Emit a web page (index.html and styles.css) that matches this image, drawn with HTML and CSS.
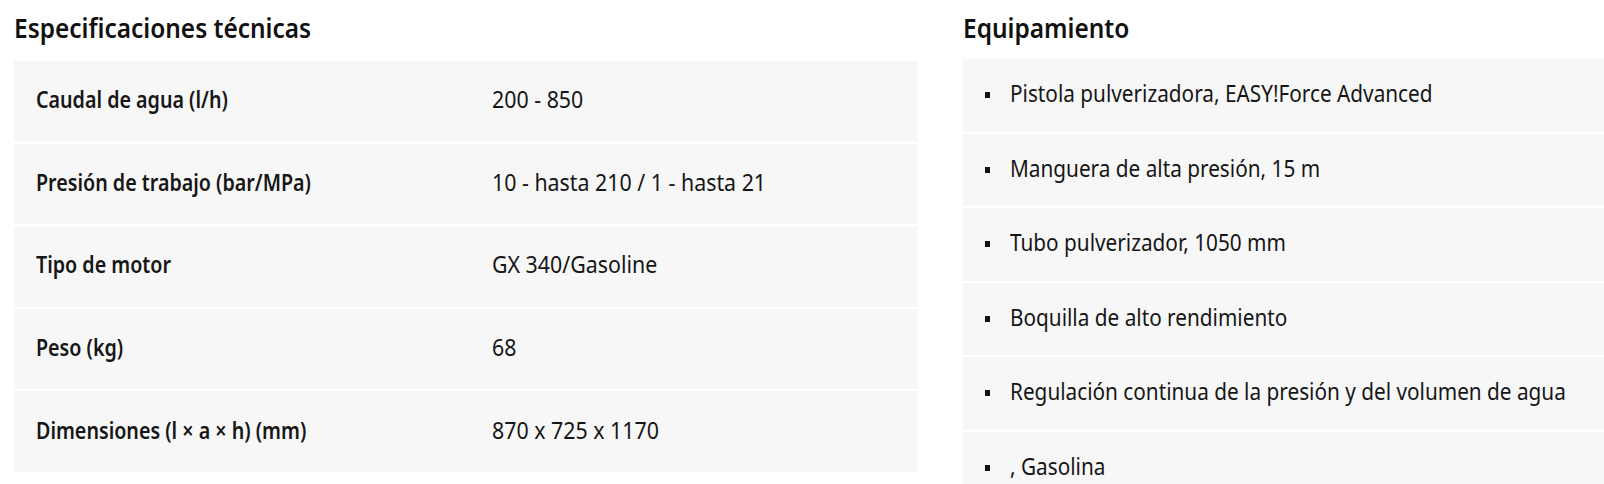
FILE: index.html
```html
<!DOCTYPE html>
<html lang="es">
<head>
<meta charset="utf-8">
<title>Especificaciones</title>
<link rel="stylesheet" href="styles.css">
</head>
<body>
<main class="specs">
  <section class="col">
    <h2 class="title title-tech"><span class="txt">Especificaciones técnicas</span></h2>
    <div class="table">
      <div class="row"><div class="label"><span class="txt">Caudal de agua (l/h)</span></div><div class="value"><span class="txt">200 - 850</span></div></div>
      <div class="row"><div class="label"><span class="txt">Presión de trabajo (bar/MPa)</span></div><div class="value"><span class="txt">10 - hasta 210 / 1 - hasta 21</span></div></div>
      <div class="row"><div class="label"><span class="txt">Tipo de motor</span></div><div class="value"><span class="txt">GX 340/Gasoline</span></div></div>
      <div class="row"><div class="label"><span class="txt">Peso (kg)</span></div><div class="value"><span class="txt">68</span></div></div>
      <div class="row"><div class="label"><span class="txt">Dimensiones (l × a × h) (mm)</span></div><div class="value"><span class="txt">870 x 725 x 1170</span></div></div>
    </div>
  </section>
  <section class="col">
    <h2 class="title title-equip"><span class="txt">Equipamiento</span></h2>
    <ul class="list">
      <li class="item"><span class="txt">Pistola pulverizadora, EASY!Force Advanced</span></li>
      <li class="item"><span class="txt">Manguera de alta presión, 15 m</span></li>
      <li class="item"><span class="txt">Tubo pulverizador, 1050 mm</span></li>
      <li class="item"><span class="txt">Boquilla de alto rendimiento</span></li>
      <li class="item"><span class="txt">Regulación continua de la presión y del volumen de agua</span></li>
      <li class="item"><span class="txt">, Gasolina</span></li>
    </ul>
  </section>
</main>
</body>
</html>
```

FILE: styles.css
```css
html, body {
  margin: 0;
  padding: 0;
  background: #ffffff;
}

body {
  font-family: "Noto Sans", "Liberation Sans", Arial, sans-serif;
  color: #161616;
}

.txt {
  display: inline-block;
  white-space: nowrap;
  transform-origin: left center;
}

.specs {
  display: grid;
  grid-template-columns: 904px 641px;
  column-gap: 45px;
  padding-left: 14px;
}

.title {
  margin: 0;
  padding-top: 11px;
  font-size: 27px;
  line-height: 34px;
  font-weight: 600;
  color: #111111;
  white-space: nowrap;
}

.title .txt {
  transform: scaleX(0.905);
}

.title-tech {
  margin-bottom: 16px;
}

.title-equip {
  margin-bottom: 14px;
}

.table {
  display: flex;
  flex-direction: column;
  gap: 2px;
}

.row {
  display: grid;
  grid-template-columns: 478px 1fr;
  align-items: center;
  box-sizing: border-box;
  height: 80.6px;
  padding-bottom: 4px;
  background: #f7f7f7;
  font-size: 24px;
  line-height: 30px;
}

.label {
  padding-left: 22px;
  font-weight: 600;
}

.label .txt {
  transform: scaleX(0.82);
}

.value {
  font-weight: 400;
}

.value .txt {
  transform: scaleX(0.89);
}

.list {
  list-style: none;
  margin: 0;
  padding: 0;
  display: flex;
  flex-direction: column;
  gap: 2px;
}

.item {
  display: flex;
  align-items: center;
  box-sizing: border-box;
  height: 72.5px;
  padding-bottom: 4px;
  background: #f7f7f7;
  font-size: 24px;
  line-height: 30px;
}

.item .txt {
  transform: scaleX(0.865);
}

.item::before {
  content: "";
  flex: none;
  width: 5px;
  height: 6px;
  margin: 4px 20px 0 22px;
  background: #111111;
}
```
